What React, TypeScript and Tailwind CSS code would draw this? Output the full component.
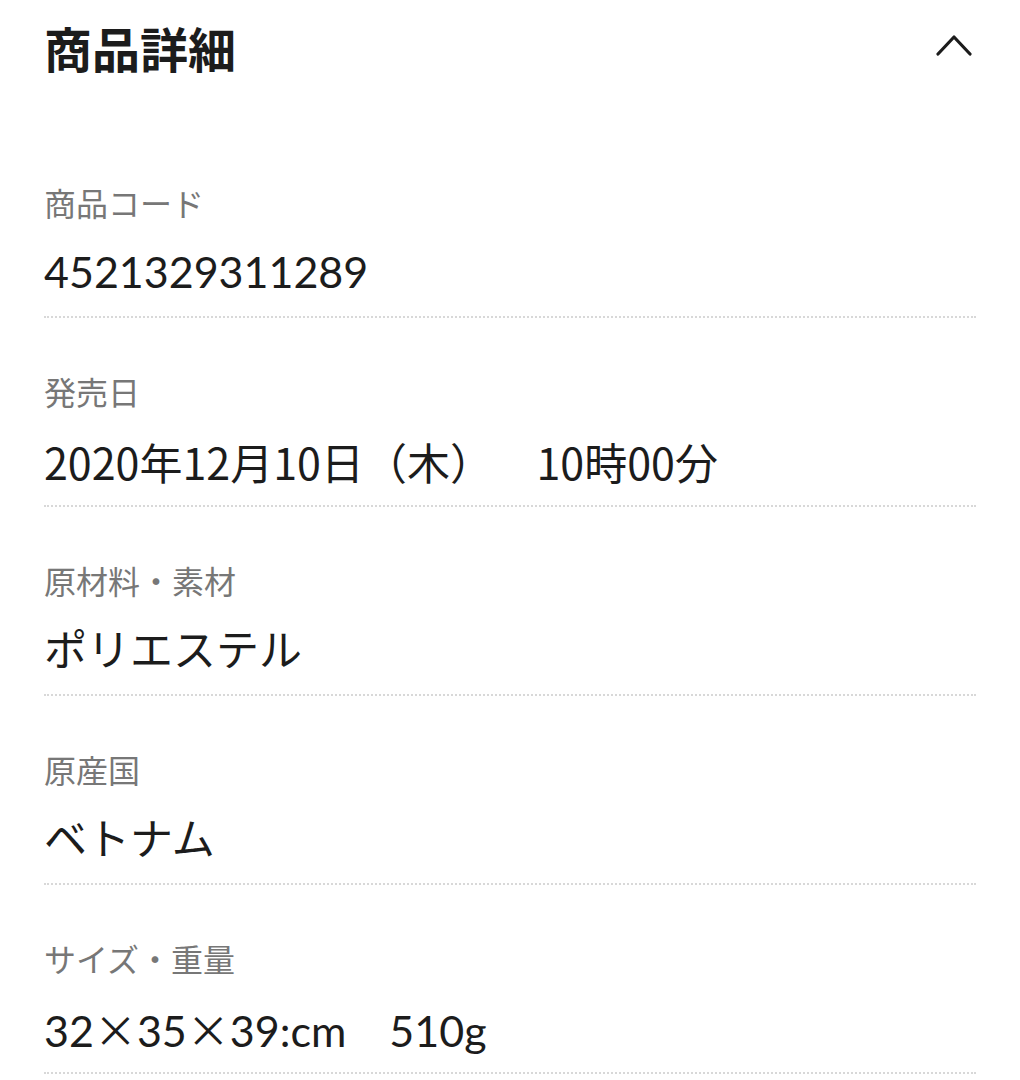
import { ReactNode } from 'react';

const rows: { label: string; value: ReactNode; cjk?: boolean }[] = [
  { label: '商品コード', value: '4521329311289' },
  {
    label: '発売日',
    value: (
      <>
        2020年12月10日（木）　<span className="ml-[22px]">10時00分</span>
      </>
    ),
    cjk: true,
  },
  { label: '原材料・素材', value: 'ポリエステル' },
  { label: '原産国', value: 'ベトナム' },
  {
    label: 'サイズ・重量',
    value: (
      <>
        32<span className="font-['Noto_Sans_CJK_JP',sans-serif]">×</span>35
        <span className="font-['Noto_Sans_CJK_JP',sans-serif]">×</span>39:cm　510g
      </>
    ),
  },
];

export default function App() {
  return (
    <div className="min-h-screen bg-white px-[44px] font-['Lato','Noto_Sans_CJK_JP',sans-serif] text-[#1c1c1c]">
      <div className="flex h-[104px] items-center justify-between">
        <h2 className="pb-[10px] font-['Noto_Sans_CJK_JP',sans-serif] text-[48px] font-bold leading-none">
          商品詳細
        </h2>
        <svg width="40" height="40" viewBox="0 0 40 40" fill="none">
          <path d="M2 22 L18 5 L34 22" stroke="#1c1c1c" strokeWidth="3.2" strokeLinecap="round" strokeLinejoin="round" />
        </svg>
      </div>

      <div className="mt-[25px]">
        {rows.map((row) => (
          <div key={row.label} className="border-b-2 border-dotted border-[#d8d8d8] pt-[51px] pb-[16px]">
            <div className="h-[48px] pb-[3px] font-['Noto_Sans_CJK_JP',sans-serif] text-[32px] leading-[45px] text-[#777777]">
              {row.label}
            </div>
            <div
              className={
                row.cjk
                  ? "mt-[16px] h-[56px] whitespace-pre font-['Noto_Sans_CJK_JP',sans-serif] text-[43px] leading-[56px]"
                  : 'mt-[16px] h-[56px] whitespace-pre text-[43px] leading-[56px]'
              }
            >
              {row.value}
            </div>
          </div>
        ))}
      </div>
    </div>
  );
}
